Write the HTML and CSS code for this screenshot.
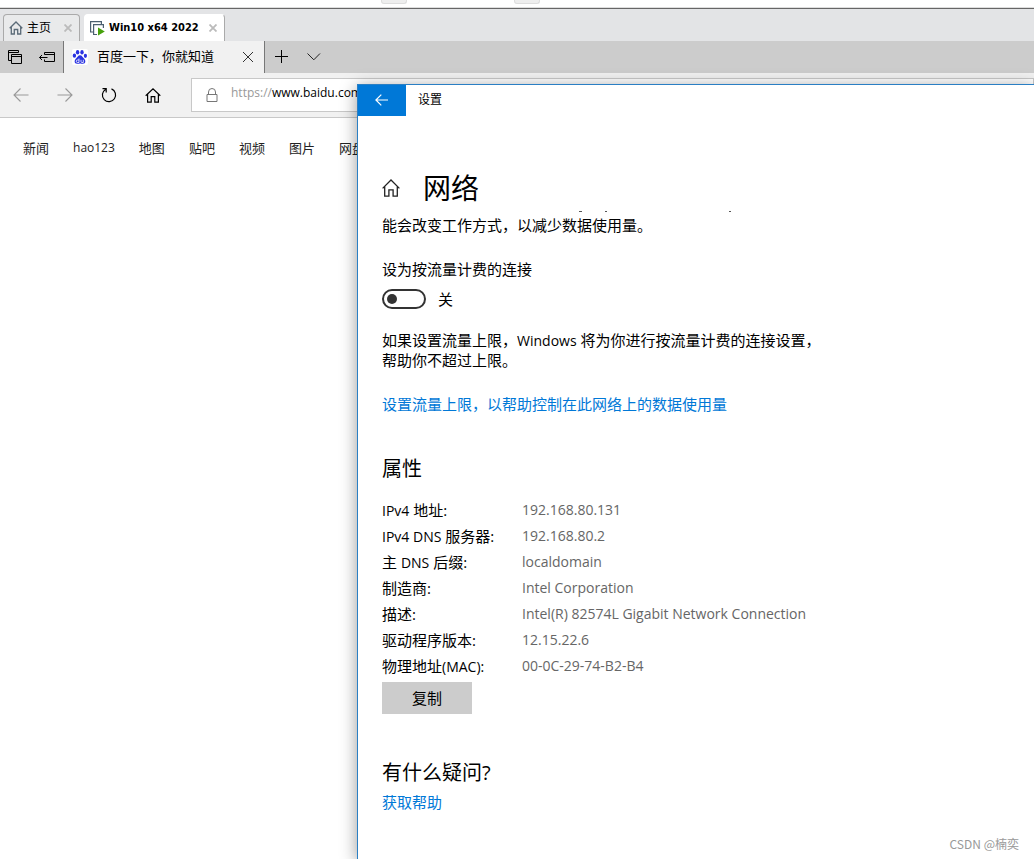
FILE: index.html
```html
<!DOCTYPE html>
<html lang="zh-CN">
<head>
<meta charset="utf-8">
<title>设置 - 网络</title>
<link rel="stylesheet" href="styles.css">
</head>
<body>
<div class="desktop">
  <div class="host-strip"><span class="stub"></span><span class="stub"></span></div>
  <div class="vm-tabs">
    <div class="vm-tab">
      <svg class="vm-home" width="14" height="14" viewBox="0 0 14 14" fill="none" stroke="#5b6b78" stroke-width="1.3"><path d="M.7 7.2 7 1l6.300 6.200M2.300 6v7h3V8.500h3.400V13h3V6"/></svg>
      <span class="vm-label">主页</span>
      <button class="vm-close" aria-label="关闭主页"><svg width="8" height="8" viewBox="0 0 8 8" stroke="#bbb" stroke-width="1.800"><path d="m.5.5 7 7m0-7-7 7"/></svg></button>
    </div>
    <div class="vm-tab active">
      <svg width="15" height="15" viewBox="0 0 15 15" fill="none"><path d="M3.500 11H.6V.6h10.800V3" stroke="#4b5f70" stroke-width="1.200"/><path d="M7 13.500H3.600V3.600h9.800V7" stroke="#4b5f70" stroke-width="1.200"/><path d="M8 6.500v8l6.800-4z" fill="#46a10c"/></svg>
      <span class="vm-label">Win10 x64 2022</span>
      <button class="vm-close" aria-label="关闭虚拟机"><svg width="8" height="8" viewBox="0 0 8 8" stroke="#bbb" stroke-width="1.800"><path d="m.5.5 7 7m0-7-7 7"/></svg></button>
    </div>
  </div>

  <div class="edge-tabs">
    <div class="edge-tools">
      <button aria-label="标签页"><svg width="15" height="15" viewBox="0 0 15 15" fill="none" stroke="#000"><path d="M3 10.500H.5v-10h10v2M.5 2.500h10M3.500 4.500h10v9h-10zM3.500 6.500h10"/></svg></button>
      <button aria-label="搁置标签页"><svg width="16" height="12" viewBox="0 0 16 12" fill="none" stroke="#000"><path d="M5.500 3.500v-2h10v9h-10v-2M5.500 3.500h10M.5 6.500h8M3 4 .5 6.500 3 9"/></svg></button>
    </div>
    <div class="edge-tab">
      <svg width="16" height="16" viewBox="0 0 16 16"><rect width="16" height="16" rx="2" fill="#fff"/><g fill="#2932e1"><ellipse cx="5.600" cy="3.200" rx="1.700" ry="2.300"/><ellipse cx="10" cy="3.200" rx="1.700" ry="2.200"/><ellipse cx="2.400" cy="6.700" rx="1.700" ry="2.100"/><ellipse cx="13.400" cy="6.800" rx="1.600" ry="2.100"/><path d="M8 6.300c2 0 2.600 2 4 3.200 1.700 1.500 2.200 5.200-1.200 5.300-1.200 0-1.800-.3-2.800-.3s-1.600.4-2.800.3C1.800 14.700 2.300 11 4 9.500 5.400 8.300 6 6.300 8 6.300z"/></g><path d="M7 9.500v4H5.500a1.200 1.200 0 0 1 0-2.500H7M9 10.800v1.700q0 1 1 1h1.300v-2.700" fill="none" stroke="#fff" stroke-width=".8"/></svg>
      <span class="edge-title">百度一下，你就知道</span>
      <button aria-label="关闭标签页"><svg width="10" height="10" viewBox="0 0 10 10" stroke="#333"><path d="m0 0 10 10M10 0 0 10"/></svg></button>
    </div>
    <button class="new-tab" aria-label="新建标签页"><svg width="14" height="14" viewBox="0 0 14 14" stroke="#000"><path d="M6.500 0v13M0 6.500h13"/></svg></button>
    <button class="tab-list" aria-label="标签页预览"><svg width="14" height="8" viewBox="0 0 14 8" fill="none" stroke="#222"><path d="m.5.5 6.300 6.300L13 .5"/></svg></button>
  </div>

  <div class="toolbar">
    <div class="nav-buttons">
      <button aria-label="后退"><svg width="16" height="14" viewBox="0 0 16 14" fill="none" stroke="#999" stroke-width="1.100"><path d="M15.500 7H1M7.500.5 1 7l6.500 6.500"/></svg></button>
      <button aria-label="前进"><svg width="16" height="14" viewBox="0 0 16 14" fill="none" stroke="#999" stroke-width="1.100"><path d="M.5 7H15M8.500.5 15 7l-6.500 6.500"/></svg></button>
      <button aria-label="刷新"><svg width="16" height="16" viewBox="0 0 16 16" fill="none" stroke="#000" stroke-width="1.200"><path d="M10.500 1.900A6.600 6.600 0 1 1 4.500 2.400M1.500 1.700h3.700v3.700"/></svg></button>
      <button aria-label="主页"><svg width="16" height="15" viewBox="0 0 16 15" fill="none" stroke="#000" stroke-width="1.200"><path d="M.7 7.800 8 .9l7.300 6.900M2.600 6.300v7.900h3.600V8.600h3.600v5.600h3.600V6.300"/></svg></button>
    </div>
    <div class="address">
      <svg width="12" height="15" viewBox="0 0 12 15" fill="none" stroke="#777"><path d="M1 6.500h10v7H1zM2.500 6.500v-2.500a3.500 3.500 0 0 1 7 0v2.500"/></svg>
      <a class="url" href="#"><span class="scheme">https://</span>www.baidu.com</a>
    </div>
  </div>

  <nav class="page-nav">
    <a href="#">新闻</a><a class="latin-link" href="#">hao123</a><a href="#">地图</a><a href="#">贴吧</a><a href="#">视频</a><a href="#">图片</a><a href="#">网盘</a>
  </nav>

  <section class="settings">
    <header class="title-bar">
      <button class="back" aria-label="返回"><svg width="13" height="12" viewBox="0 0 13 12" fill="none" stroke="#fff" stroke-width="1.200"><path d="M13 6H1M6.300.6.900 6l5.400 5.400"/></svg></button>
      <span class="window-title">设置</span>
    </header>
    <main class="content">
      <div class="page-head">
        <svg width="18" height="18" viewBox="0 0 18 18" fill="none" stroke="#222" stroke-width="1.300"><path d="M.6 9.400 9 1l8.400 8.400M2.700 7.500v9.700h4.200v-6.300h4.200v6.300h4.200V7.500"/></svg>
        <h1>网络</h1>
      </div>
      <svg class="scroll-edge" width="360" height="2" viewBox="0 0 360 2" fill="#555"><path d="M197 0h3v1h-3zM223 0h2v1h-2zM347 0h2v1h-2z"/></svg>
      <p class="intro">能会改变工作方式，以减少数据使用量。</p>
      <label class="field-label" for="metered">设为按流量计费的连接</label>
      <div class="toggle-row"><input type="checkbox" id="metered" class="toggle"><span>关</span></div>
      <p class="hint">如果设置流量上限，<span class="latin">Windows</span> 将为你进行按流量计费的连接设置，<br>帮助你不超过上限。</p>
      <a class="link" href="#">设置流量上限，以帮助控制在此网络上的数据使用量</a>
      <h2>属性</h2>
      <table class="props">
        <tr><th scope="row"><span class="latin">IPv4</span> 地址:</th><td>192.168.80.131</td></tr>
        <tr><th scope="row"><span class="latin">IPv4 DNS</span> 服务器:</th><td>192.168.80.2</td></tr>
        <tr><th scope="row">主 <span class="latin">DNS</span> 后缀:</th><td>localdomain</td></tr>
        <tr><th scope="row">制造商:</th><td>Intel Corporation</td></tr>
        <tr><th scope="row">描述:</th><td>Intel(R) 82574L Gigabit Network Connection</td></tr>
        <tr><th scope="row">驱动程序版本:</th><td>12.15.22.6</td></tr>
        <tr><th scope="row">物理地址<span class="latin">(MAC):</span></th><td>00-0C-29-74-B2-B4</td></tr>
      </table>
      <button class="copy">复制</button>
      <h2 class="help-title">有什么疑问?</h2>
      <a class="link" href="#">获取帮助</a>
    </main>
    <div class="watermark">CSDN @楠奕</div>
  </section>
</div>
</body>
</html>
```
FILE: styles.css
```css
* { box-sizing: border-box; }
body {
  margin: 0;
  background: #fff;
  color: #000;
  font: 15px/20px "Open Sans", "Noto Sans CJK SC", sans-serif;
}
button { border: 0; padding: 0; background: none; font: inherit; color: inherit; display: flex; align-items: center; justify-content: center; }
svg { display: block; flex: none; }
a { color: inherit; text-decoration: none; }
h1, h2, p { margin: 0; font-weight: 400; }

.desktop { position: relative; min-height: 100vh; overflow: hidden; }

.host-strip { display: flex; gap: 107px; height: 9px; padding-left: 381px; border-bottom: 1px solid #666; box-shadow: inset 0 -1px #ddd; }
.stub { width: 26px; height: 4px; background: #eee; border: 1px solid #ddd; border-top: 0; border-radius: 0 0 3px 3px; }

.vm-tabs { display: flex; align-items: flex-end; gap: 4px; height: 32px; padding-left: 3px; background: #e3e4e6; font-size: 12px; }
.vm-tab { display: flex; align-items: center; height: 27px; padding: 0 7px 0 5px; background: #e9eaeb; border: 1px solid #aaa; border-bottom: 0; border-radius: 4px 4px 0 0; width: 77px; gap: 4px; }
.vm-tab.active { width: 141px; background: #fff; font-family: "DejaVu Sans Condensed", "DejaVu Sans", sans-serif; font-weight: 700; font-size: 11px; border-color: #fff #aaa #fff #fff; }
.vm-label { white-space: nowrap; }
.vm-close { margin-left: auto; }

.edge-tabs { display: flex; height: 32px; background: #ccc; }
.edge-tools { display: flex; align-items: center; gap: 16px; width: 64px; padding-left: 8px; border-right: 1px solid #777; }
.edge-tab { display: flex; align-items: center; gap: 9px; width: 201px; padding: 0 11px 0 8px; background: #f1f1f1; border-right: 1px solid #777; font-size: 13px; }
.edge-title { flex: 1; padding-bottom: 2px; white-space: nowrap; }
.new-tab { width: 34px; }
.tab-list { width: 30px; }

.toolbar { display: flex; align-items: center; height: 45px; background: #f1f1f1; border-bottom: 1px solid #c8c8c8; }
.nav-buttons { display: flex; gap: 28px; width: 191px; padding-left: 13px; flex: none; }
.nav-buttons button { height: 16px; }
.address { flex: 1; display: flex; align-items: center; gap: 13px; height: 34px; padding-left: 14px; background: #fff; border: 1px solid #c8c8c8; font-size: 12px; }
.url { padding-bottom: 4px; }
.scheme { color: #999; }

.page-nav { display: flex; gap: 24px; padding: 20px 23px; font-size: 13px; color: #222; white-space: nowrap; }
.latin-link { font-size: 12px; }

.settings {
  position: absolute;
  inset: 84px 0 0 357px;
  display: flex;
  flex-direction: column;
  background: #fff;
  border: solid #2a7fc4;
  border-width: 1px 0 0 1px;
  box-shadow: 0 3px 16px rgba(0, 0, 0, .4);
}
.title-bar { display: flex; align-items: center; gap: 12px; height: 31px; font-size: 12px; }
.window-title { padding-bottom: 2px; }
.back { width: 48px; height: 31px; padding: 0 1px 2px 0; background: #0078d7; }
.content { flex: 1; display: flex; flex-direction: column; align-items: flex-start; padding: 51px 24px 0; }
.page-head { display: flex; align-items: center; gap: 23px; height: 42px; }
h1 { font-size: 28px; line-height: 42px; }
.scroll-edge { margin-top: 2px; }
.intro { margin-top: 2px; }
.field-label { margin-top: 24px; }
.toggle-row { display: flex; align-items: center; gap: 12px; margin-top: 10px; }
.toggle { appearance: none; width: 44px; height: 20px; margin: 0; padding: 3px; border: 2px solid #333; border-radius: 10px; }
.toggle::before { content: ""; display: block; width: 10px; height: 10px; border-radius: 50%; background: #333; }
.hint { margin-top: 21px; }
.link { margin-top: 24px; color: #0078d7; }
h2 { margin-top: 41px; font-size: 20px; line-height: 28px; }
.latin { font-size: 14px; line-height: 14px; }
.props { margin-top: 14px; border-collapse: collapse; }
.props th, .props td { padding: 0; height: 26px; text-align: left; font-weight: 400; white-space: nowrap; }
.props th { width: 140px; }
.props td { color: #666; font-size: 14px; }
.copy { width: 90px; height: 32px; margin-top: 3px; background: #ccc; }
.help-title { margin-top: 45px; }
.help-title + .link { margin-top: 5px; }
.watermark { align-self: flex-end; padding: 0 15px 5px; color: #999; font: 12px/20px "Noto Sans CJK SC", sans-serif; }
```
